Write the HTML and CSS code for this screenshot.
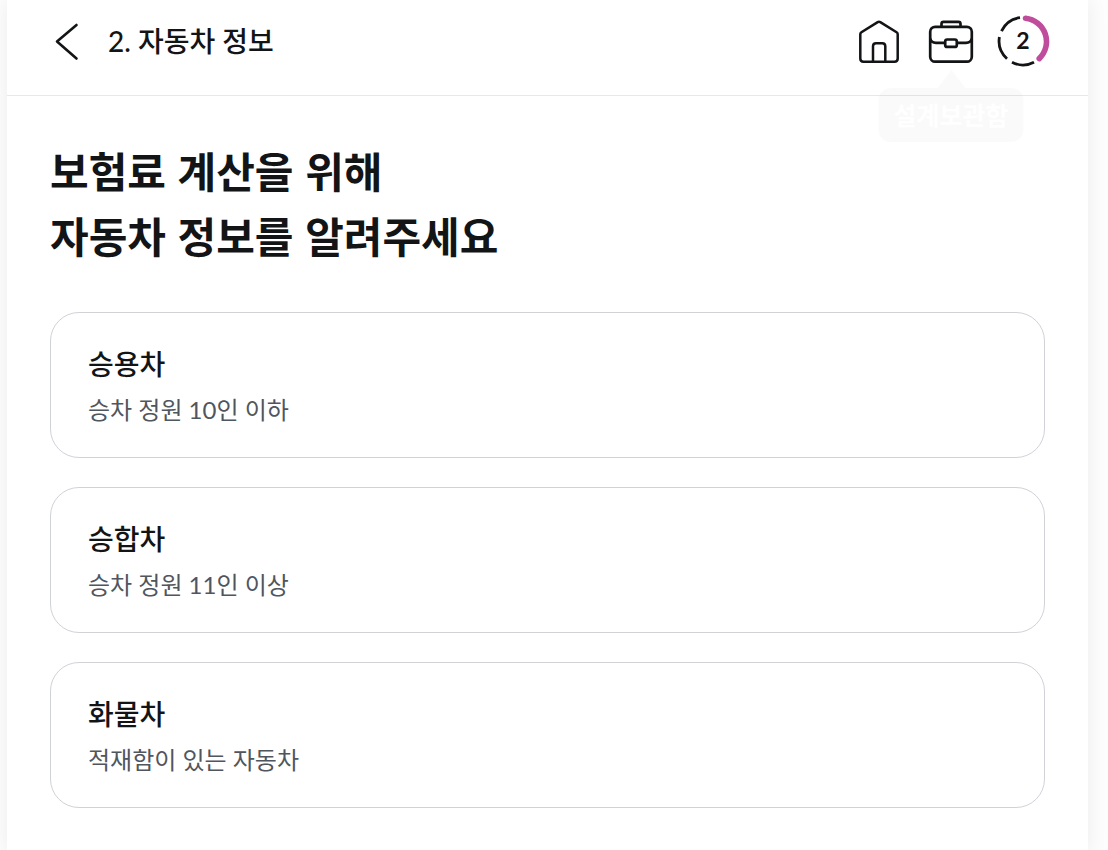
FILE: index.html
```html
<!DOCTYPE html>
<html lang="ko">
<head>
<meta charset="utf-8">
<meta name="viewport" content="width=device-width, initial-scale=1">
<title>자동차 정보</title>
<link rel="stylesheet" href="styles.css">
</head>
<body>
<div class="page">
  <header class="header">
    <button class="icon-button back" type="button" aria-label="이전">
      <svg width="26" height="40" viewBox="0 0 26 40" fill="none" stroke="#131416" stroke-width="2.6" stroke-linecap="round" stroke-linejoin="round"><path d="M23.5 4 4 20.5l19.5 17"/></svg>
    </button>
    <p class="step-title">2. 자동차 정보</p>
    <nav class="actions">
      <a class="icon-button" href="#" aria-label="홈">
        <svg width="44" height="46" viewBox="0 -2 44 46" fill="none" stroke="#131416" stroke-width="2.5" stroke-linejoin="round"><path d="M3.3 14.2Q3.3 13 4.4 12.3L20.7 2.1Q22 1.3 23.3 2.1L39.6 12.3Q40.7 13 40.7 14.2V38.5Q40.7 41.7 37.5 41.7H6.5Q3.3 41.7 3.3 38.5Z"/><path d="M16 41.7V26.3Q16 23.3 19 23.3H25.3Q28.3 23.3 28.3 26.3V41.7"/></svg>
      </a>
      <div class="storage">
        <a class="icon-button" href="#" aria-describedby="storage-tip" aria-label="설계보관함">
          <svg width="46" height="46" viewBox="0 -2 46 46" fill="none" stroke="#131416" stroke-width="2.7" stroke-linejoin="round"><rect x="2.2" y="6.8" width="41.6" height="34.9" rx="5"/><path d="M13.5 6.8V3.8Q13.5 1.8 15.5 1.8H30.5Q32.5 1.8 32.5 3.8V6.8"/><path d="M2.2 18.5Q3.2 22.8 8 22.8H17.2M28.8 22.8H38Q42.8 22.8 43.8 18.5"/><rect x="17.2" y="19.5" width="11.6" height="7.4" rx="2"/></svg>
        </a>
        <div class="tooltip" id="storage-tip" role="tooltip">설계보관함</div>
      </div>
      <button class="icon-button progress" type="button" aria-label="진행 단계 2">
        <svg width="54" height="54" viewBox="0 0 54 54" fill="none"><g stroke="#131416" stroke-width="2.8"><path d="M16 48.2A24 24 0 0 0 38 48.2"/><path d="M11 44.7A24 24 0 0 1 3.4 23"/><path d="M5.5 17.2A24 24 0 0 1 24 3.7"/></g><path d="M29.5 4.2A23.5 23.5 0 0 1 43.2 44.6" stroke="#c04d9b" stroke-width="5.6" stroke-linecap="round"/></svg>
        <span class="progress-number">2</span>
      </button>
    </nav>
  </header>
  <main class="content">
    <h1 class="heading">보험료 계산을 위해<br>자동차 정보를 알려주세요</h1>
    <div class="options">
      <button class="option" type="button"><span class="option-name">승용차</span><span class="option-note">승차 정원 10인 이하</span></button>
      <button class="option" type="button"><span class="option-name">승합차</span><span class="option-note">승차 정원 11인 이상</span></button>
      <button class="option" type="button"><span class="option-name">화물차</span><span class="option-note">적재함이 있는 자동차</span></button>
    </div>
  </main>
</div>
</body>
</html>
```

FILE: styles.css
```css
* {
  box-sizing: border-box;
}

body {
  margin: 0;
  background: #fdfdfd;
  color: #131416;
  font-family: Lato, "Noto Sans CJK KR", sans-serif;
}

button {
  font: inherit;
  color: inherit;
}

.page {
  min-height: 100vh;
  margin: 0 20px 0 7px;
  background: #fff;
  box-shadow: 0 0 20px rgba(0, 0, 0, 0.07);
}

.header {
  display: flex;
  align-items: center;
  padding: 14px 38px 27px 46px;
  border-bottom: 1px solid #e8e8ea;
}

.icon-button {
  display: block;
  padding: 0;
  border: 0;
  background: none;
}

.icon-button svg {
  display: block;
}

.step-title {
  flex: 1;
  margin: 0 0 0 29px;
  font-size: 28px;
  font-weight: 500;
  line-height: 42px;
}

.actions {
  display: flex;
  align-items: center;
  gap: 27px;
}

.storage {
  position: relative;
}

.tooltip {
  position: absolute;
  top: 70px;
  left: 50%;
  padding: 9px 15px;
  transform: translateX(-50%);
  border-radius: 12px;
  background: rgba(0, 0, 0, 0.02);
  color: #fff;
  font-size: 25px;
  font-weight: 700;
  line-height: 36px;
  white-space: nowrap;
}

.tooltip::before {
  content: "";
  position: absolute;
  bottom: 100%;
  left: 50%;
  border: 14px solid transparent;
  border-top: 0;
  border-bottom: 18px solid rgba(0, 0, 0, 0.02);
  transform: translateX(-50%);
}

.progress {
  position: relative;
  margin-left: -5px;
}

.progress-number {
  position: absolute;
  inset: 0;
  font-size: 23px;
  font-weight: 700;
  line-height: 52px;
  text-align: center;
}

.content {
  padding: 45px 43px;
}

.heading {
  margin: 0;
  font-family: "Liberation Sans", "Noto Sans CJK KR", sans-serif;
  font-size: 42px;
  font-weight: 700;
  line-height: 65px;
}

.options {
  display: grid;
  gap: 29px;
  margin-top: 41px;
}

.option {
  display: flex;
  flex-direction: column;
  gap: 10px;
  padding: 31px 37px;
  border: 1px solid #d0d2d8;
  border-radius: 29px;
  background: #fff;
  text-align: left;
}

.option-name {
  font-size: 28px;
  font-weight: 500;
  line-height: 40px;
}

.option-note {
  color: #50565e;
  font-size: 24px;
  line-height: 32px;
}
```
